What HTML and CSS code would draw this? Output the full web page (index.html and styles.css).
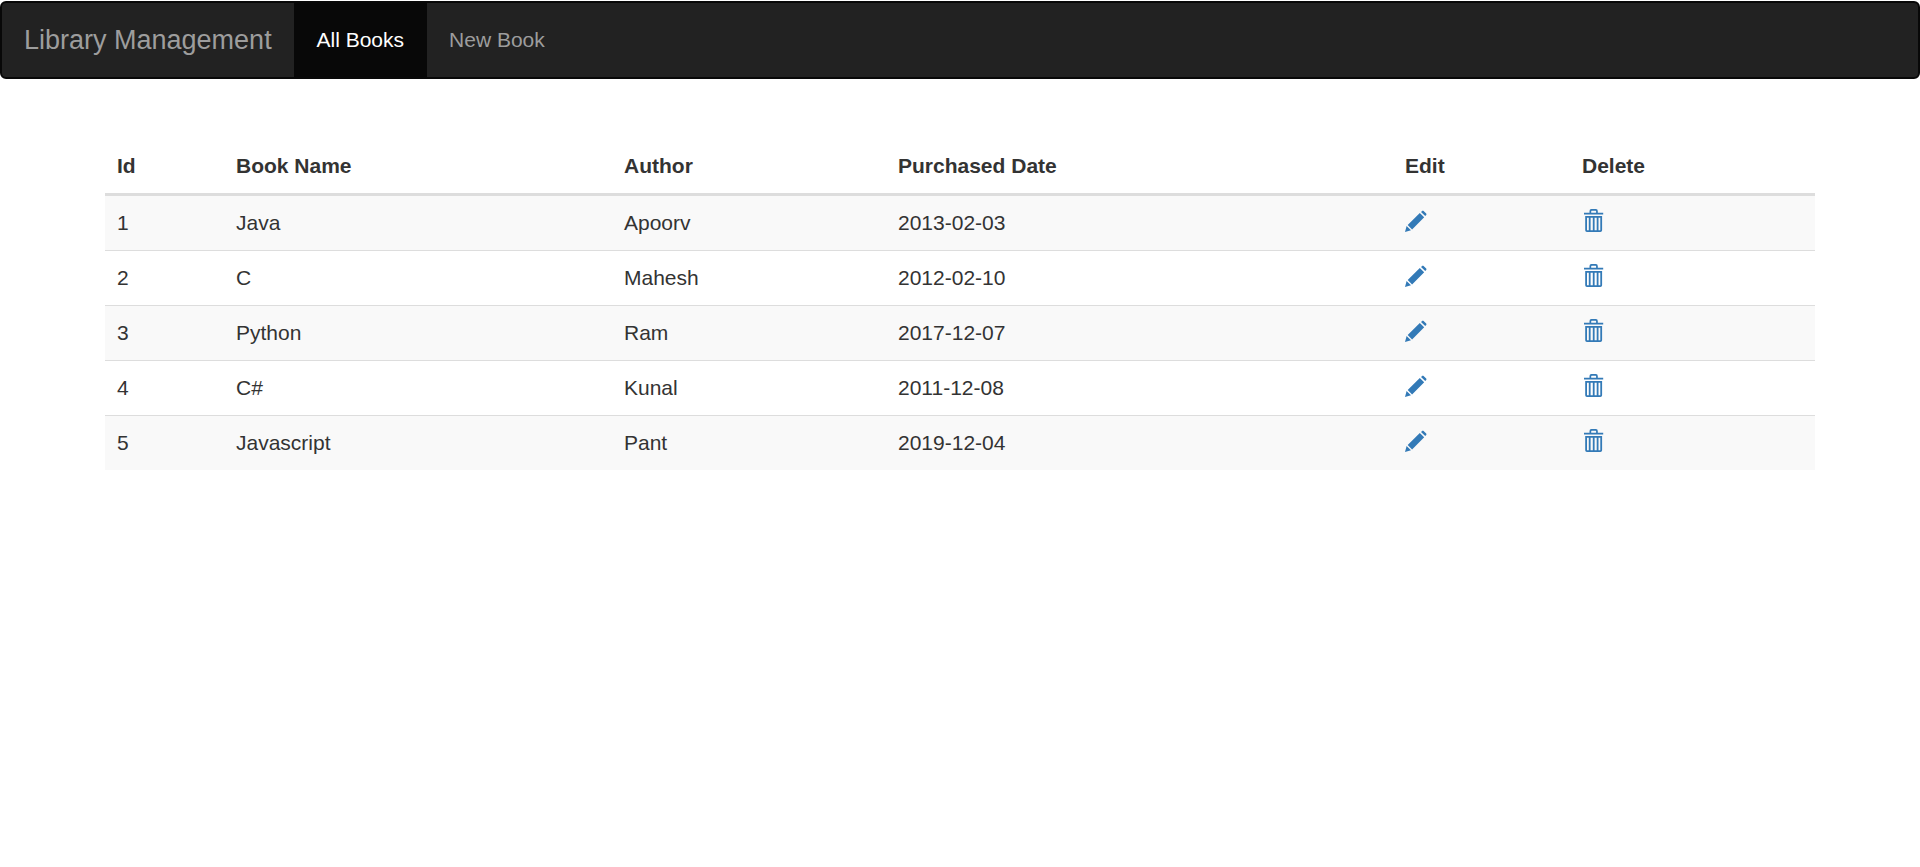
FILE: index.html
```html
<!DOCTYPE html>
<html lang="en">
<head>
<meta charset="utf-8">
<title>Library Management</title>
<link rel="stylesheet" href="styles.css">
</head>
<body>
<svg class="sprite" aria-hidden="true">
  <symbol id="pencil" viewBox="0 0 24 24">
    <path d="M0 23.9 1.6 18.1 6 22.3ZM2.7 17 14.8 4.9 19.2 9.3 7.1 21.4ZM16 3.9 17.2 2.9Q17.9 2.3 18.6 2.9L21.2 5.5Q21.8 6.2 21.2 6.9L20.2 8.1Z"/>
  </symbol>
  <symbol id="trash" viewBox="0 0 24 24">
    <path fill-rule="evenodd" d="M2 4.7H7.5V3Q7.5 1 9.4 1H13.9Q15.8 1 15.8 3V4.7H21.2V6.4H2ZM9.2 4.7H14.1V3.2Q14.1 2.7 13.6 2.7H9.7Q9.2 2.7 9.2 3.2ZM3.2 7.9H20.1V22.2Q20.1 24 18.3 24H5Q3.2 24 3.2 22.2ZM5 9.8V22.3H6.8V9.8ZM8.6 9.8V22.3H10.8V9.8ZM12.6 9.8V22.3H14.7V9.8ZM16.5 9.8V22.3H18.3V9.8Z"/>
  </symbol>
</svg>
<nav class="navbar">
  <a class="brand">Library Management</a>
  <a class="nav-link active">All Books</a>
  <a class="nav-link">New Book</a>
</nav>
<main class="container">
  <table class="table">
    <colgroup><col class="c-id"><col class="c-name"><col class="c-author"><col class="c-date"><col class="c-edit"><col></colgroup>
    <thead>
      <tr><th>Id</th><th>Book Name</th><th>Author</th><th>Purchased Date</th><th>Edit</th><th>Delete</th></tr>
    </thead>
    <tbody>
      <tr><td>1</td><td>Java</td><td>Apoorv</td><td>2013-02-03</td><td><svg class="icon"><use href="#pencil"/></svg></td><td><svg class="icon"><use href="#trash"/></svg></td></tr>
      <tr><td>2</td><td>C</td><td>Mahesh</td><td>2012-02-10</td><td><svg class="icon"><use href="#pencil"/></svg></td><td><svg class="icon"><use href="#trash"/></svg></td></tr>
      <tr><td>3</td><td>Python</td><td>Ram</td><td>2017-12-07</td><td><svg class="icon"><use href="#pencil"/></svg></td><td><svg class="icon"><use href="#trash"/></svg></td></tr>
      <tr><td>4</td><td>C#</td><td>Kunal</td><td>2011-12-08</td><td><svg class="icon"><use href="#pencil"/></svg></td><td><svg class="icon"><use href="#trash"/></svg></td></tr>
      <tr><td>5</td><td>Javascript</td><td>Pant</td><td>2019-12-04</td><td><svg class="icon"><use href="#pencil"/></svg></td><td><svg class="icon"><use href="#trash"/></svg></td></tr>
    </tbody>
  </table>
</main>
</body>
</html>
```

FILE: styles.css
```css
* { box-sizing: border-box; }
body {
  margin: 0;
  padding-top: 1px;
  background: #fff;
  color: #333;
  font: 21px/30px "Liberation Sans", Arial, sans-serif;
}
.sprite { display: none; }
.navbar {
  display: flex;
  height: 78px;
  border: 2px solid #080808;
  border-radius: 6px;
  background: #222;
}
.brand {
  width: 292px;
  padding: 22px;
  color: #9d9d9d;
  font-size: 27px;
  white-space: nowrap;
}
.nav-link {
  padding: 22px 22.5px;
  color: #9d9d9d;
}
.nav-link.active { background: #080808; color: #fff; }
.container { width: 1710px; margin: 60px auto 0; }
.table {
  width: 100%;
  table-layout: fixed;
  border-collapse: separate;
  border-spacing: 0;
}
.c-id { width: 119px; }
.c-name { width: 388px; }
.c-author { width: 274px; }
.c-date { width: 507px; }
.c-edit { width: 177px; }
th, td { padding: 12px; text-align: left; vertical-align: top; }
th { border-bottom: 3px solid #ddd; }
td { height: 55px; border-top: 1px solid #ddd; }
tbody tr:first-child td { height: 54px; border-top: 0; }
tbody tr:nth-child(odd) { background: #f9f9f9; }
.icon { display: block; width: 24px; height: 24px; fill: #337ab7; }
```
